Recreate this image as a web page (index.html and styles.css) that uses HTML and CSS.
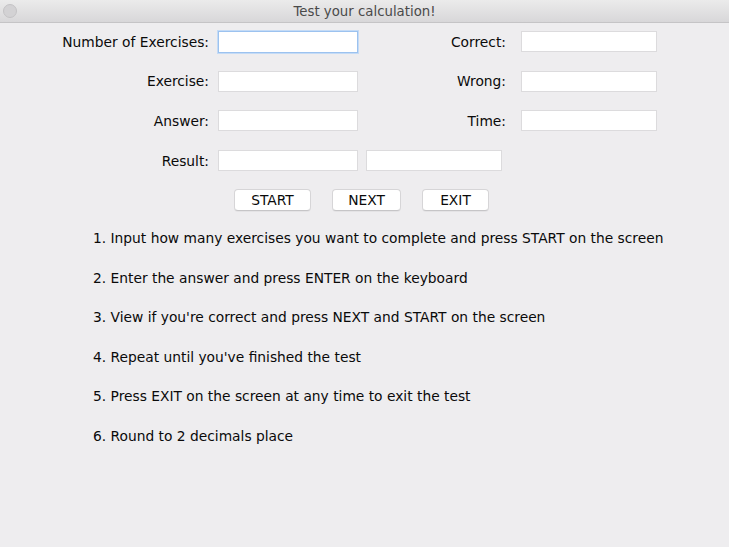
FILE: index.html
```html
<!DOCTYPE html>
<html>
<head>
<meta charset="utf-8">
<title>Test your calculation!</title>
<link rel="stylesheet" href="styles.css">
</head>
<body>
<div class="window">
  <div class="titlebar">
    <span class="dot"></span>
    <span class="title">Test your calculation!</span>
  </div>
  <div class="content">
    <div class="form">
      <label class="lbl">Number of Exercises:</label>
      <input class="field f2 focus" type="text">
      <label class="lbl">Correct:</label>
      <input class="field f4" type="text">

      <label class="lbl">Exercise:</label>
      <input class="field f2" type="text">
      <label class="lbl">Wrong:</label>
      <input class="field f4" type="text">

      <label class="lbl">Answer:</label>
      <input class="field f2" type="text">
      <label class="lbl">Time:</label>
      <input class="field f4" type="text">

      <label class="lbl">Result:</label>
      <input class="field f2" type="text">
      <input class="field f3" type="text">
      <span></span>
    </div>
    <div class="buttons">
      <button class="btn start">START</button>
      <button class="btn next">NEXT</button>
      <button class="btn exit">EXIT</button>
    </div>
    <ul class="steps">
      <li>1. Input how many exercises you want to complete and press START on the screen</li>
      <li>2. Enter the answer and press ENTER on the keyboard</li>
      <li>3. View if you're correct and press NEXT and START on the screen</li>
      <li>4. Repeat until you've finished the test</li>
      <li>5. Press EXIT on the screen at any time to exit the test</li>
      <li>6. Round to 2 decimals place</li>
    </ul>
  </div>
</div>
</body>
</html>
```

FILE: styles.css
```css
* { box-sizing: border-box; }
html, body {
  margin: 0;
  padding: 0;
  width: 729px;
  height: 547px;
  overflow: hidden;
  background: #eeedef;
  font-family: "DejaVu Sans", "Liberation Sans", sans-serif;
  color: #0a0a0a;
}
.window {
  width: 729px;
  height: 547px;
  display: flex;
  flex-direction: column;
}
.titlebar {
  height: 23px;
  flex: none;
  background: linear-gradient(#ebebeb, #d8d7d9);
  border-bottom: 1px solid #c5c4c6;
  display: flex;
  align-items: center;
  justify-content: center;
  position: relative;
}
.dot {
  position: absolute;
  left: 3px;
  top: 4px;
  width: 14px;
  height: 14px;
  border-radius: 50%;
  background: #d3d2d4;
  border: 1px solid #c4c3c5;
}
.title {
  font-size: 13.3px;
  color: #4a4a4a;
  padding-top: 1px;
}
.content {
  padding-top: 8px;
}
.form {
  display: grid;
  grid-template-columns: 209px 149px 148px 151px;
  row-gap: 18.7px;
  grid-auto-rows: 21px;
  align-items: center;
}
.lbl {
  font-size: 13.8px;
  text-align: right;
  white-space: nowrap;
}
.field {
  height: 21px;
  border: 1px solid #dcdbdd;
  background: #fff;
  margin: 0;
  padding: 0;
  outline: none;
  font: inherit;
}
.f2 { margin-left: 9px; width: 140px; }
.f3 { margin-left: 8px; width: 136px; }
.f4 { margin-left: 15px; width: 136px; }
.field.focus {
  height: 22px;
  border: 1px solid #9cc2ef;
  box-shadow: 0 0 0 1px #c4dbf6;
}
.buttons {
  display: flex;
  padding-left: 234px;
  column-gap: 21px;
  margin-top: 18px;
}
.btn {
  height: 22px;
  margin: 0;
  padding: 0;
  background: #fff;
  border: 1px solid #d6d5d7;
  border-bottom-color: #c6c5c7;
  border-radius: 4px;
  font-family: inherit;
  font-size: 13.8px;
  color: #0a0a0a;
  box-shadow: 0 1px 0 rgba(0,0,0,0.04);
}
.start { width: 77px; }
.next { width: 69px; }
.exit { width: 67px; }
.steps {
  list-style: none;
  margin: 8px 0 0 0;
  padding: 0 0 0 93px;
  display: flex;
  flex-direction: column;
}
.steps li {
  font-size: 13.8px;
  line-height: 39.5px;
  height: 39.5px;
  white-space: nowrap;
}
```
